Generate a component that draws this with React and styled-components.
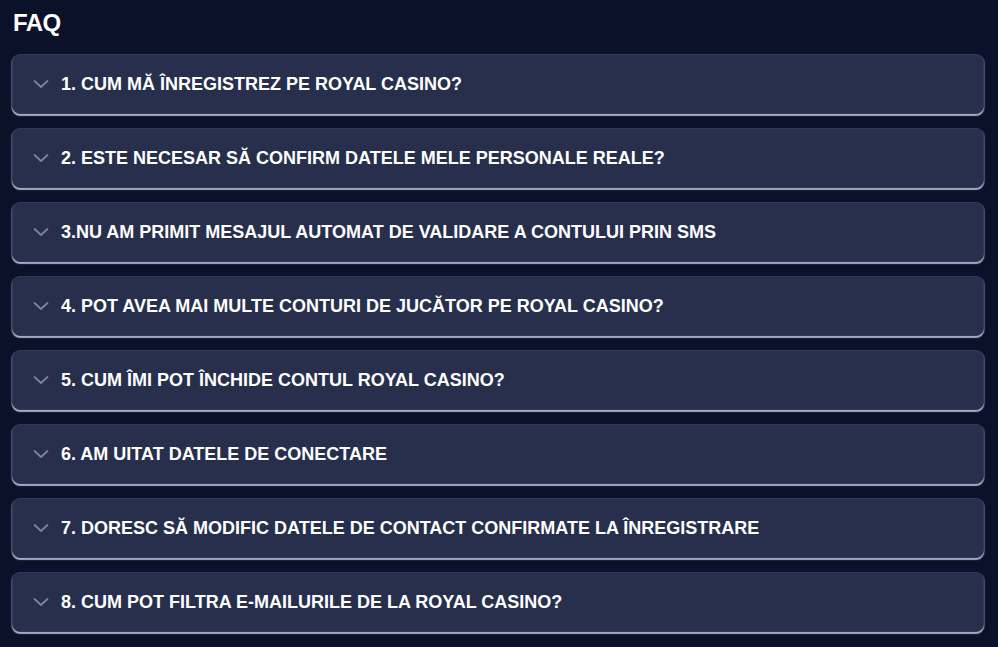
import React from 'react'
import styled, { createGlobalStyle } from 'styled-components'

const questions = [
  '1. CUM MĂ ÎNREGISTREZ PE ROYAL CASINO?',
  '2. ESTE NECESAR SĂ CONFIRM DATELE MELE PERSONALE REALE?',
  '3.NU AM PRIMIT MESAJUL AUTOMAT DE VALIDARE A CONTULUI PRIN SMS',
  '4. POT AVEA MAI MULTE CONTURI DE JUCĂTOR PE ROYAL CASINO?',
  '5. CUM ÎMI POT ÎNCHIDE CONTUL ROYAL CASINO?',
  '6. AM UITAT DATELE DE CONECTARE',
  '7. DORESC SĂ MODIFIC DATELE DE CONTACT CONFIRMATE LA ÎNREGISTRARE',
  '8. CUM POT FILTRA E-MAILURILE DE LA ROYAL CASINO?',
]

const GlobalStyle = createGlobalStyle`
  html, body {
    margin: 0;
    padding: 0;
    background: #0b1129;
  }
  body {
    font-family: "Liberation Sans", Arial, sans-serif;
    color: #fff;
  }
`

const Page = styled.div`
  padding: 9px 14px 14px 12px;
`

const Title = styled.h2`
  margin: 0 0 17px 1px;
  font-size: 24px;
  font-weight: 700;
  line-height: 28px;
  letter-spacing: -0.6px;
`

const List = styled.div`
  display: flex;
  flex-direction: column;
  gap: 14px;
`

const Item = styled.div`
  height: 58px;
  display: flex;
  align-items: center;
  gap: 12px;
  padding-left: 20px;
  background: #272f4c;
  border-radius: 8px;
  border: 1px solid #313a5a;
  box-shadow: 0 2px 1px #a3a9c0, -1px 1px 1px rgba(120, 126, 150, 0.5),
    1px 1px 1px rgba(120, 126, 150, 0.5);
  cursor: pointer;
`

const Chevron = styled.svg`
  width: 16px;
  height: 16px;
  flex: none;
  color: #7d839f;
`

const Question = styled.span`
  font-size: 18px;
  font-weight: 700;
  letter-spacing: 0;
`

export default function App() {
  return (
    <>
      <GlobalStyle />
      <Page>
        <Title>FAQ</Title>
        <List>
          {questions.map((q) => (
            <Item key={q}>
              <Chevron viewBox="0 0 16 16" fill="none">
                <path
                  d="M1.5 5 L8 11 L14.5 5"
                  stroke="currentColor"
                  strokeWidth="1.8"
                  strokeLinecap="round"
                  strokeLinejoin="round"
                />
              </Chevron>
              <Question>{q}</Question>
            </Item>
          ))}
        </List>
      </Page>
    </>
  )
}
